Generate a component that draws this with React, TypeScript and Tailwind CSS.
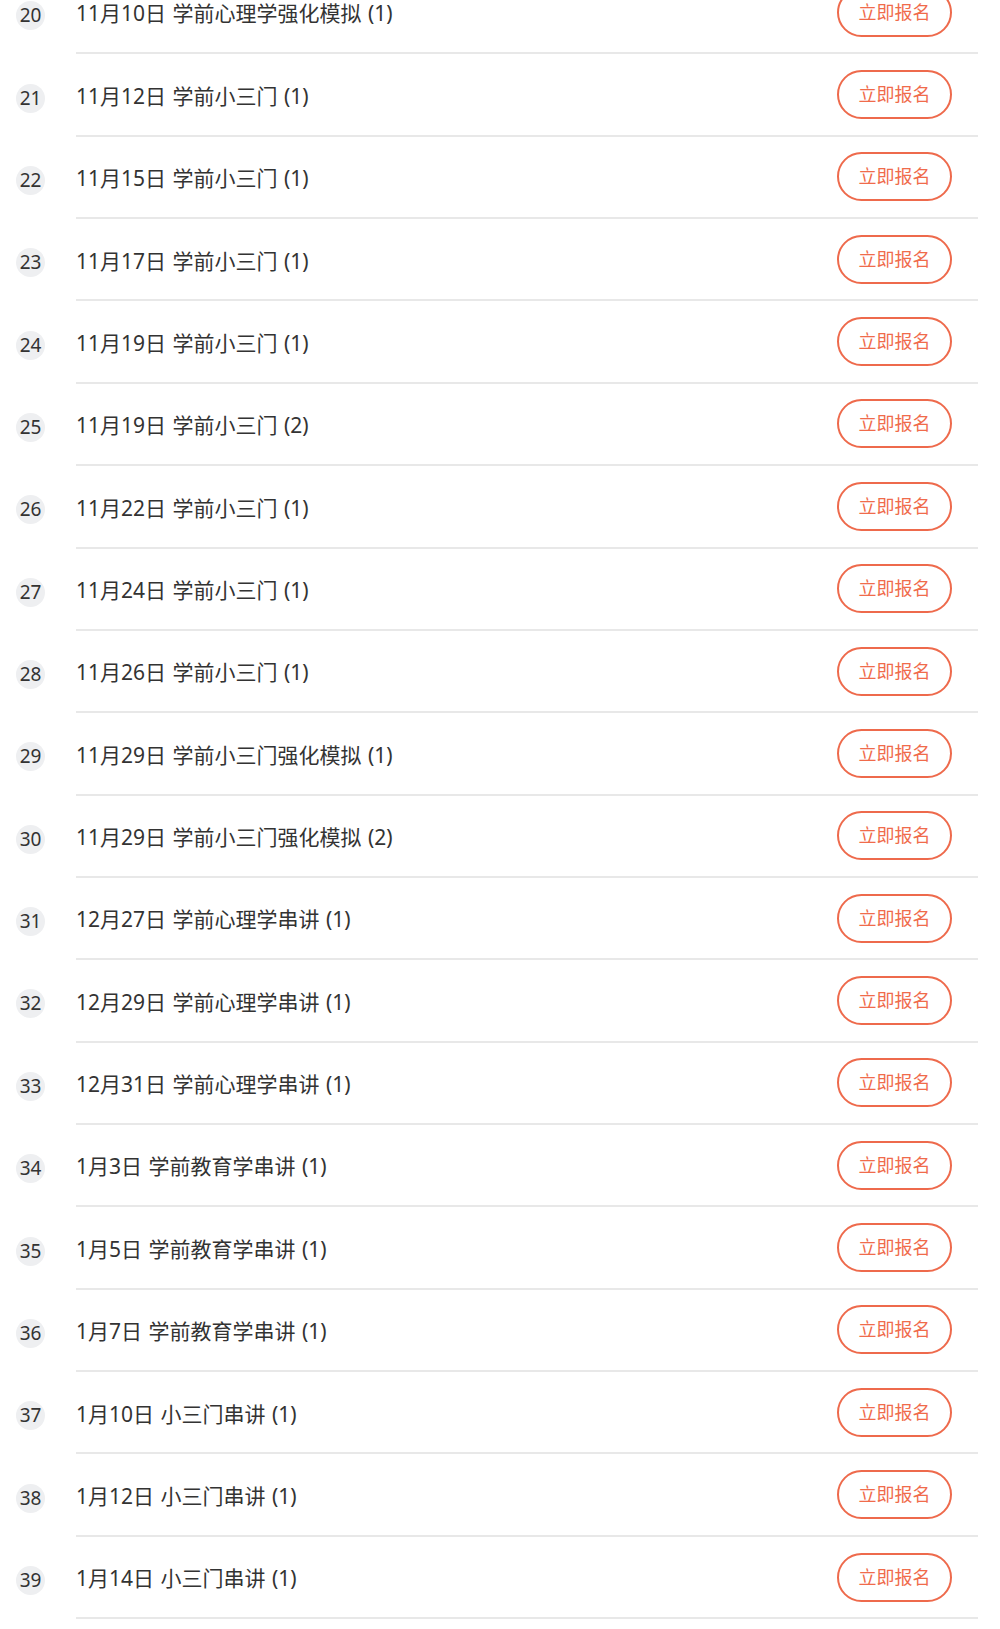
const ROWS: [number, string][] = [
    [20, '11月10日 学前心理学强化模拟 (1)'],
    [21, '11月12日 学前小三门 (1)'],
    [22, '11月15日 学前小三门 (1)'],
    [23, '11月17日 学前小三门 (1)'],
    [24, '11月19日 学前小三门 (1)'],
    [25, '11月19日 学前小三门 (2)'],
    [26, '11月22日 学前小三门 (1)'],
    [27, '11月24日 学前小三门 (1)'],
    [28, '11月26日 学前小三门 (1)'],
    [29, '11月29日 学前小三门强化模拟 (1)'],
    [30, '11月29日 学前小三门强化模拟 (2)'],
    [31, '12月27日 学前心理学串讲 (1)'],
    [32, '12月29日 学前心理学串讲 (1)'],
    [33, '12月31日 学前心理学串讲 (1)'],
    [34, '1月3日 学前教育学串讲 (1)'],
    [35, '1月5日 学前教育学串讲 (1)'],
    [36, '1月7日 学前教育学串讲 (1)'],
    [37, '1月10日 小三门串讲 (1)'],
    [38, '1月12日 小三门串讲 (1)'],
    [39, '1月14日 小三门串讲 (1)'],
]

function Row({ num, title }: { num: number; title: string }) {
    return (
        <div className="flex h-[82.37px]">
            {/* 序号 */}
            <div className="w-[76px] shrink-0 flex items-center">
                <span className="ml-[16px] mt-[5px] w-[29px] h-[29px] rounded-full bg-[#eeeff1] flex items-center justify-center text-[19px] leading-none text-[#333]">
                    {num}
                </span>
            </div>
            <div className="flex-1 mr-[22px] h-full border-b-2 border-[#e8e8e8] flex items-center justify-between">
                <p className="text-[21px] text-[#333] mt-[4px] [word-spacing:1px]">{title}</p>
                <button className="mr-[26px] w-[115px] h-[49px] rounded-full border-2 border-[#ee6a4c] text-[18px] text-[#f06b4b] bg-white">
                    立即报名
                </button>
            </div>
        </div>
    )
}

export default function App() {
    return (
        <div className="w-[1000px] h-[1629px] overflow-hidden bg-white font-['Noto_Sans','Noto_Sans_CJK_SC',sans-serif]">
            <div className="-mt-[28px]">
                {ROWS.map(([n, t]) => (
                    <Row key={n} num={n} title={t} />
                ))}
            </div>
        </div>
    )
}
